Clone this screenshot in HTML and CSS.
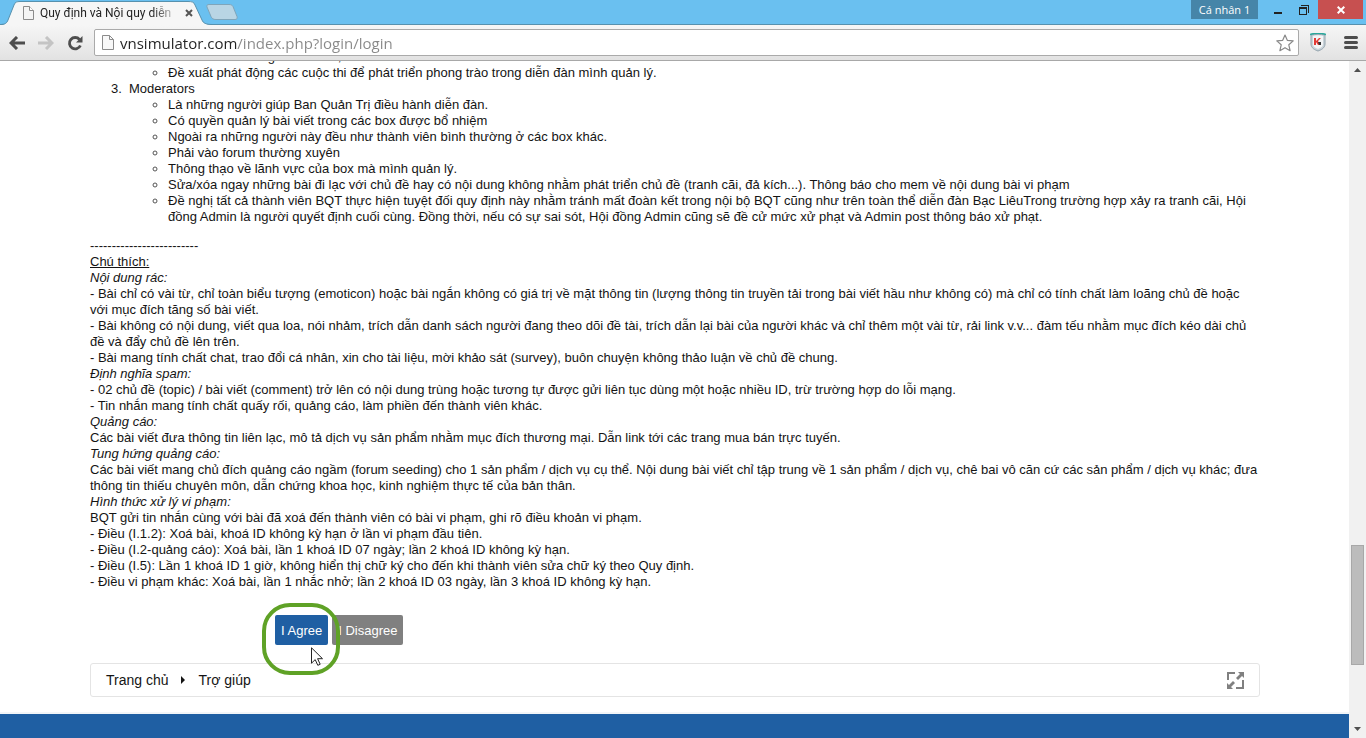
FILE: index.html
```html
<!DOCTYPE html>
<html lang="vi">
<head>
    <meta charset="utf-8">
    <title>Quy định và Nội quy diễn đàn</title>
    <link rel="stylesheet" href="styles.css">
</head>
<body>
    <header class="titlebar">
        <div class="tab">
            <svg class="tab-shape" width="212" height="25" viewBox="0 0 212 25">
                <path d="M0 25 C5 25 7 23 8 20 L14 5 C15 2 17 1 20 1 H188 C192 1 194 2 195 5 L202 20 C203 23 206 24.500 212 25 Z" fill="#f6f6f6"/>
                <path d="M0 24.500 C5 24.500 7 23 8 20 L14 5 C15 2 17 1.500 20 1.500 H188 C192 1.500 194 2 195 5 L202 20 C203 23 206 24.500 212 24.500" fill="none" stroke="#5791ae"/>
            </svg>
            <svg class="page-icon" width="11" height="14" viewBox="0 0 11 14">
                <path d="M.5.500h6l4 4v9H.5z" fill="#f4f4f4" stroke="#8b8b8b"/>
                <path d="M6.500.500v4h4" fill="#fff" stroke="#8b8b8b"/>
            </svg>
            <span class="tab-title">Quy định và Nội quy diễn</span>
            <button class="tab-close" aria-label="Close tab">
                <svg width="8" height="8" viewBox="0 0 8 8"><path d="M1 1l6 6M7 1L1 7" stroke="#555" stroke-width="2"/></svg>
            </button>
        </div>
        <button class="new-tab" aria-label="New tab">
            <svg width="32" height="16" viewBox="0 0 32 16"><path d="M3 .5H23c2 0 3 .5 4 2l4 10c.5 2 0 3-2 3H10c-3 0-4-1-5-3L1 3C.5 1.500 1 .5 3 .5z" fill="#b9d5e4" stroke="#7fa5ba"/></svg>
        </button>
        <div class="window-buttons">
            <button class="profile">Cá nhân 1</button>
            <button class="win minimize" aria-label="Minimize">
                <svg width="8" height="8" viewBox="0 0 8 8"><path d="M0 6h8v2H0z" fill="#222"/></svg>
            </button>
            <button class="win restore" aria-label="Restore">
                <svg width="10" height="10" viewBox="0 0 10 10"><path d="M2 0h8v8H9V1H2zM0 2h8v8H0zm1 2v5h6V4z" fill="#222" fill-rule="evenodd"/></svg>
            </button>
            <button class="win close" aria-label="Close">
                <svg width="8" height="8" viewBox="0 0 8 8"><path d="M.7.700l6.600 6.600M7.300.700L.7 7.300" stroke="#fff" stroke-width="2"/></svg>
            </button>
        </div>
    </header>

    <nav class="toolbar">
        <button class="tool" aria-label="Back">
            <svg width="16" height="14" viewBox="0 0 16 14"><path d="M8 1L2 7l6 6M2 7h14" fill="none" stroke="#4d4d4d" stroke-width="3"/></svg>
        </button>
        <button class="tool" aria-label="Forward">
            <svg width="16" height="14" viewBox="0 0 16 14"><path d="M8 1l6 6-6 6M14 7H0" fill="none" stroke="#c4c4c4" stroke-width="3"/></svg>
        </button>
        <button class="tool" aria-label="Reload">
            <svg width="16" height="16" viewBox="0 0 16 16"><path d="M12.500 4.500A5.700 5.700 0 1 0 13.400 10.500" fill="none" stroke="#4d4d4d" stroke-width="2.800"/><path d="M15.500 1v6.500H9z" fill="#4d4d4d"/></svg>
        </button>
        <div class="omnibox">
            <svg class="page-icon" width="12" height="15" viewBox="0 0 12 15">
                <path d="M.5.500h7l4 4v10H.5z" fill="#f8f8f8" stroke="#8b8b8b"/>
                <path d="M7.500.500v4h4" fill="none" stroke="#8b8b8b"/>
            </svg>
            <input class="url" type="text" aria-label="Address" value="vnsimulator.com/index.php?login/login">
            <button class="star" aria-label="Bookmark">
                <svg width="18" height="18" viewBox="0 0 18 18"><path d="M9 1l2.300 5.300 5.900.600-4.400 3.900 1.300 5.900L9 13.700l-5.100 3 1.300-5.900L.8 6.900l5.900-.6z" fill="#fff" stroke="#888" stroke-width="1.200" stroke-linejoin="round"/></svg>
            </button>
        </div>
        <button class="tool shield" aria-label="Kaspersky">
            <svg width="16" height="19" viewBox="0 0 16 19">
                <path d="M1 2c4-1 10-1 14 0v9c0 4-4 6-7 7-3-1-7-3-7-7z" fill="#c9d3d9" stroke="#93a3ad"/>
                <path d="M3 3c3-1 7-1 10 0v8c0 3-3 4-5 5-2-1-5-2-5-5z" fill="#f3f5f6"/>
                <path d="M0 1.500c5-1.500 11-1.500 16 0" fill="none" stroke="#2aa79b" stroke-width="1.500"/>
                <path d="M4 5h2v3l3-3h2L8 8l2 4H8L6 9v3H4z" fill="#e23b36"/>
                <path d="M8 9h3v3H9z" fill="#333"/>
            </svg>
        </button>
        <button class="tool menu" aria-label="Menu">
            <svg width="14" height="13" viewBox="0 0 14 13"><path d="M1.500 1.500h11M1.500 6.500h11M1.500 11.500h11" stroke="#4d4d4d" stroke-width="3" stroke-linecap="round"/></svg>
        </button>
    </nav>

    <div class="viewport">
        <main class="page">
            <div class="content">
                <ol class="rules" start="2">
                    <li class="clipped">
                        <ul>
                            <li>Đưa ra các hướng đi cho box,</li>
                            <li>Đề xuất phát động các cuộc thi để phát triển phong trào trong diễn đàn mình quản lý.</li>
                        </ul>
                    </li>
                    <li>Moderators
                        <ul>
                            <li>Là những người giúp Ban Quản Trị điều hành diễn đàn.</li>
                            <li>Có quyền quản lý bài viết trong các box được bổ nhiệm</li>
                            <li>Ngoài ra những người này đều như thành viên bình thường ở các box khác.</li>
                            <li>Phải vào forum thường xuyên</li>
                            <li>Thông thạo về lãnh vực của box mà mình quản lý.</li>
                            <li>Sửa/xóa ngay những bài đi lạc với chủ đề hay có nội dung không nhằm phát triển chủ đề (tranh cãi, đả kích...). Thông báo cho mem về nội dung bài vi phạm</li>
                            <li>Đề nghị tất cả thành viên BQT thực hiện tuyệt đối quy định này nhằm tránh mất đoàn kết trong nội bộ BQT cũng như trên toàn thể diễn đàn Bạc LiêuTrong trường hợp xảy ra tranh cãi, Hội đồng Admin là người quyết định cuối cùng. Đồng thời, nếu có sự sai sót, Hội đồng Admin cũng sẽ đề cử mức xử phạt và Admin post thông báo xử phạt.</li>
                        </ul>
                    </li>
                </ol>
                <div class="notes">
                    -------------------------<br>
                    <u>Chú thích:</u><br>
                    <i>Nội dung rác:</i><br>
                    - Bài chỉ có vài từ, chỉ toàn biểu tượng (emoticon) hoặc bài ngắn không có giá trị về mặt thông tin (lượng thông tin truyền tải trong bài viết hầu như không có) mà chỉ có tính chất làm loãng chủ đề hoặc với mục đích tăng số bài viết.<br>
                    - Bài không có nội dung, viết qua loa, nói nhảm, trích dẫn danh sách người đang theo dõi đề tài, trích dẫn lại bài của người khác và chỉ thêm một vài từ, rải link v.v... đàm tếu nhằm mục đích kéo dài chủ đề và đẩy chủ đề lên trên.<br>
                    - Bài mang tính chất chat, trao đổi cá nhân, xin cho tài liệu, mời khảo sát (survey), buôn chuyện không thảo luận về chủ đề chung.<br>
                    <i>Định nghĩa spam:</i><br>
                    - 02 chủ đề (topic) / bài viết (comment) trở lên có nội dung trùng hoặc tương tự được gửi liên tục dùng một hoặc nhiều ID, trừ trường hợp do lỗi mạng.<br>
                    - Tin nhắn mang tính chất quấy rối, quảng cáo, làm phiền đến thành viên khác.<br>
                    <i>Quảng cáo:</i><br>
                    Các bài viết đưa thông tin liên lạc, mô tả dịch vụ sản phẩm nhằm mục đích thương mại. Dẫn link tới các trang mua bán trực tuyến.<br>
                    <i>Tung hứng quảng cáo:</i><br>
                    Các bài viết mang chủ đích quảng cáo ngầm (forum seeding) cho 1 sản phẩm / dịch vụ cụ thể. Nội dung bài viết chỉ tập trung về 1 sản phẩm / dịch vụ, chê bai vô căn cứ các sản phẩm / dịch vụ khác; đưa thông tin thiếu chuyên môn, dẫn chứng khoa học, kinh nghiệm thực tế của bản thân.<br>
                    <i>Hình thức xử lý vi phạm:</i><br>
                    BQT gửi tin nhắn cùng với bài đã xoá đến thành viên có bài vi phạm, ghi rõ điều khoản vi phạm.<br>
                    - Điều (I.1.2): Xoá bài, khoá ID không kỳ hạn ở lần vi phạm đầu tiên.<br>
                    - Điều (I.2-quảng cáo): Xoá bài, lần 1 khoá ID 07 ngày; lần 2 khoá ID không kỳ hạn.<br>
                    - Điều (I.5): Lần 1 khoá ID 1 giờ, không hiển thị chữ ký cho đến khi thành viên sửa chữ ký theo Quy định.<br>
                    - Điều vi phạm khác: Xoá bài, lần 1 nhắc nhở; lần 2 khoá ID 03 ngày, lần 3 khoá ID không kỳ hạn.
                </div>
                <form class="actions">
                    <div class="highlighted">
                        <button type="button" class="btn agree">I Agree</button>
                        <span class="ring"></span>
                        <svg class="cursor" width="12" height="19" viewBox="0 0 12 19"><path d="M.5.800v15.400l3.700-3.600 2.600 5.700 2.400-1-2.600-5.600h4.900z" fill="#fff" stroke="#222"/></svg>
                    </div>
                    <button type="button" class="btn disagree">I Disagree</button>
                </form>
                <nav class="breadcrumb">
                    <a href="#">Trang chủ</a>
                    <span class="arrow"></span>
                    <a href="#">Trợ giúp</a>
                    <button class="expand" aria-label="Toggle width">
                        <svg width="17" height="17" viewBox="0 0 17 17" fill="#808080">
                            <path d="M0 0h8v2H2v6H0zM17 17H9v-2h6V8h2z"/>
                            <path d="M11 0h6v6l-2-2-4 4-2-2 4-4zM6 17H0v-6l2 2 4-4 2 2-4 4z"/>
                        </svg>
                    </button>
                </nav>
            </div>
            <footer class="footer"></footer>
        </main>
        <div class="scrollbar">
            <svg width="7" height="4" viewBox="0 0 7 4"><path d="M0 4L3.500 0 7 4z" fill="#505050"/></svg>
            <div class="thumb"></div>
            <svg width="7" height="4" viewBox="0 0 7 4"><path d="M0 0l3.500 4L7 0z" fill="#505050"/></svg>
        </div>
    </div>
</body>
</html>
```
FILE: styles.css
```css
@counter-style wide-decimal {
    system: extends decimal;
    suffix: ".\a0\a0";
}
* {
    box-sizing: border-box;
}
body {
    margin: 0;
    height: 100vh;
    display: flex;
    flex-direction: column;
    overflow: hidden;
    font-family: "Liberation Sans", Arial, sans-serif;
    font-size: 13px;
    line-height: 16px;
    color: #141414;
}
button {
    border: 0;
    padding: 0;
    background: none;
    font-family: inherit;
}
svg {
    display: block;
    flex: none;
}

/* browser window */
.titlebar {
    display: flex;
    height: 25px;
    flex: none;
    background: #6ac0f0;
    border-bottom: 1px solid #5791ae;
    font-family: "Open Sans", "Noto Sans", sans-serif;
}
.tab {
    position: relative;
    z-index: 1;
    display: flex;
    align-items: center;
    width: 206px;
    height: 25px;
    padding-left: 23px;
}
.tab-shape {
    position: absolute;
    left: 0;
    top: 0;
    z-index: -1;
}
.tab-title {
    width: 140px;
    margin-left: 6px;
    white-space: nowrap;
    font-family: Roboto, sans-serif;
    font-size: 12px;
    color: #222;
    mask-image: linear-gradient(to right, #000 112px, transparent);
}
.tab-close {
    margin-left: 5px;
}
.new-tab {
    align-self: center;
}
.window-buttons {
    display: flex;
    align-items: flex-start;
    margin-left: auto;
    padding-right: 3px;
}
.profile {
    width: 67px;
    height: 19px;
    background: #4685a8;
    color: #fff;
    font-size: 11px;
}
.win {
    display: flex;
    align-items: center;
    justify-content: center;
    width: 26px;
    height: 19px;
}
.minimize {
    width: 40px;
}
.restore {
    margin-right: 8px;
    width: 12px;
}
.close {
    width: 45px;
    background: #c75050;
}
.toolbar {
    display: flex;
    align-items: center;
    flex: none;
    gap: 13px;
    height: 36px;
    padding: 0 8px 0 9px;
    background: linear-gradient(#f6f6f6, #e2e2e2);
    border-bottom: 1px solid #a8a8a8;
}
.omnibox {
    display: flex;
    align-items: center;
    flex: 1;
    height: 27px;
    margin: 0 -2px;
    padding: 0 4px 0 7px;
    background: #fff;
    border: 1px solid #aaa;
    border-radius: 2px;
}
.url {
    flex: 1;
    min-width: 0;
    margin-left: 6px;
    padding: 0;
    border: 0;
    outline: 0;
    font-family: "Open Sans", "Noto Sans", sans-serif;
    font-size: 15px;
    color: transparent;
    background: linear-gradient(to right, #222 117px, #888 117px);
    background-clip: text;
}
.menu {
    margin-left: 5px;
}

/* web page */
.viewport {
    display: flex;
    flex: 1;
    min-height: 0;
}
.page {
    display: flex;
    flex-direction: column;
    justify-content: flex-end;
    flex: 1;
    overflow: hidden;
}
.content {
    padding: 0 89px 15px 90px;
}
.rules {
    margin: 0 0 13px;
    padding-left: 39px;
    list-style: wide-decimal;
}
.rules ul {
    margin: 0;
    padding-left: 39px;
    list-style: circle;
}
.rules ul li::marker {
    color: #555;
}
.clipped {
    list-style: none;
}
.actions {
    display: flex;
    gap: 4px;
    margin: 25px 0 18px;
    padding-left: 185px;
}
.highlighted {
    position: relative;
    z-index: 1;
}
.btn {
    height: 30px;
    padding: 0 6px;
    border-radius: 2px;
    font-size: 13px;
    color: #fff;
}
.agree {
    background: #1f5fa3;
}
.disagree {
    background: #808080;
}
.ring {
    position: absolute;
    left: -13px;
    top: -12px;
    width: 78px;
    height: 72px;
    border: 4px solid #5fa226;
    border-radius: 28px;
}
.cursor {
    position: absolute;
    left: 36px;
    top: 32px;
}
.breadcrumb {
    display: flex;
    align-items: center;
    height: 34px;
    padding: 0 15px;
    border: 1px solid #e4e4e4;
    border-radius: 3px;
    font-size: 14px;
}
.breadcrumb a {
    color: #141414;
    text-decoration: none;
}
.arrow {
    margin: 0 14px 0 12px;
    border: 4px solid transparent;
    border-left: 4px solid #141414;
    border-right: 0;
}
.expand {
    margin-left: auto;
}
.footer {
    flex: none;
    height: 26px;
    background: #1f5fa3;
    border-top: 2px solid #f2f5f8;
}

.scrollbar {
    display: flex;
    flex-direction: column;
    align-items: center;
    width: 17px;
    padding: 7px 0;
    background: #f1f1f1;
}
.thumb {
    width: 13px;
    height: 120px;
    margin: auto 0 62px;
    background: #bcbcbc;
    border: 1px solid #a8a8a8;
}
```
